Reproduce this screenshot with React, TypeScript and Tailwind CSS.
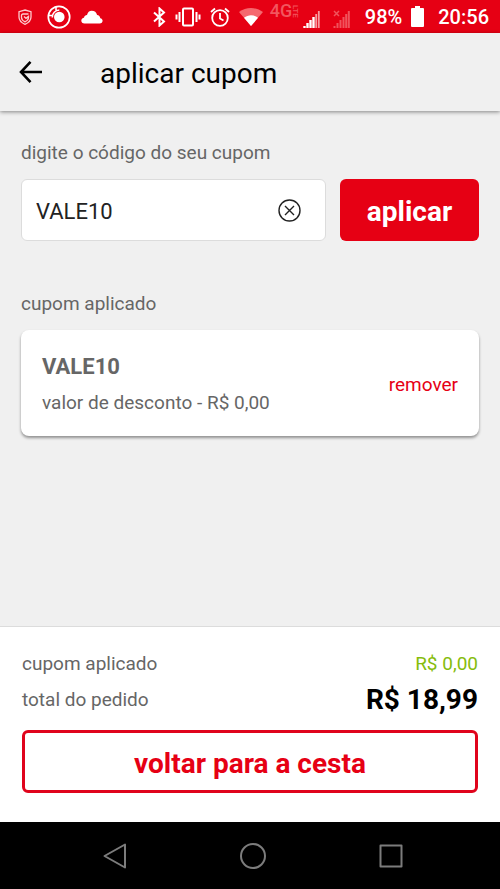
import { useState } from "react";

function StatusBar() {
  return (
    <div className="flex h-[33px] items-center justify-between bg-[#e60014] pr-[11px] pl-[18px] text-white">
      <div className="flex items-center">
        <svg className="h-4 w-[14px]" viewBox="0 0 14 16" fill="none" stroke="#ffc9cc" strokeWidth="1.3">
          <path d="M7 1 13 2.700V8c0 3.500-2.500 5.800-6 7.300C3.500 13.800 1 11.500 1 8V2.700Z" />
          <path d="M10.500 5H5Q3.500 5 3.500 6.500v2C3.500 10.500 5 11.800 7 12.800c2-1 3.500-2.300 3.500-4.300V7.300L8 9.300 6 7.500" />
        </svg>
        <svg className="ml-[15px] size-6" viewBox="0 0 24 24" fill="none" stroke="white">
          <circle cx="12" cy="12" r="10.700" strokeWidth="1.700" />
          <circle cx="12.300" cy="12" r="5.300" fill="white" stroke="none" />
          <path d="M9 1.500v3.800M1.500 10.500h4M5.300 12.500a7.200 7.200 0 0 1 7-7.500" strokeWidth="1.600" />
        </svg>
        <svg className="ml-[10px] h-[14px] w-[22px]" viewBox="0 0 22 14" fill="white">
          <path d="M3.500 13.500C1.500 13.500.300 12.300.300 10.700.300 9 1.500 8 3 7.800 3.300 6 4.600 5 6 5 6.700 2.300 8.300.800 10.700.800c2.800 0 4.800 1.500 5.400 4.200 1.800.100 3 1.400 3.200 3.200 1.500.300 2.300 1.300 2.300 2.600 0 1.600-1.200 2.700-2.900 2.700Z" />
        </svg>
      </div>
      <div className="flex items-center">
        <svg className="h-5 w-[13px]" viewBox="0 0 13 20" fill="none" stroke="white" strokeWidth="2">
          <path d="m1 5.500 10 9L6.500 18.500v-17L11 5.500l-10 9" />
        </svg>
        <svg className="ml-[9px] h-5 w-[26px]" viewBox="0 0 26 20" fill="none" stroke="white" strokeWidth="2">
          <rect x="8" y="1.500" width="10" height="17" rx="1" />
          <path d="M4.500 5v10M1.500 7.500v5M21.500 5v10M24.500 7.500v5" strokeWidth="2" />
        </svg>
        <svg className="ml-[9px] size-5" viewBox="0 0 20 20" fill="none" stroke="white" strokeWidth="1.800">
          <circle cx="10" cy="11" r="7.800" />
          <path d="M10 6v5.500l3.500 2M1 5l4-3.500M19 5l-4-3.500" />
        </svg>
        <svg className="ml-[9px] h-[18px] w-6" viewBox="0 0 24 18">
          <path d="M0 4C7-1.300 17-1.300 24 4L12 18Z" fill="#f5686f" />
          <path d="M5 9.800c4.200-3.400 9.800-3.400 14 0L12 18Z" fill="white" />
        </svg>
        <span className="mb-[11px] ml-[7px] flex h-4 w-[31px] items-center text-[#f2555e]">
          <span className="text-[18px] leading-4 font-medium">4G</span>
          <span className="text-[8px] leading-[7px] font-medium [writing-mode:vertical-rl]">LTE</span>
        </span>
        <svg className="mt-1 ml-[2px] h-[18px] w-[17px]" viewBox="0 0 17 18" strokeWidth="2.400">
          <path d="M1.500 18v-2M4.500 18v-5M7.500 18v-8M10.500 18V7" stroke="white" />
          <path d="M13.200 18V4M15.800 18V1" strokeWidth="1.800" stroke="#f79ba0" />
        </svg>
        <svg className="mt-1 ml-[13px] h-[18px] w-[17px]" viewBox="0 0 17 18" fill="none" stroke="#f0535c">
          <path d="M1.500 18v-2M4.500 18v-5M7.500 18v-8M10.500 18V7M13.200 18V4M15.800 18V1" strokeWidth="2" />
          <path d="m1 1 5 5M6 1 1 6" strokeWidth="1.500" />
        </svg>
        <span className="ml-[15px] text-xl leading-6 font-medium">98%</span>
        <svg className="ml-[9px] h-[21px] w-[13px]" viewBox="0 0 13 21" fill="white">
          <path d="M4 0h5v2h3q1 0 1 1v17q0 1-1 1H1q-1 0-1-1V3q0-1 1-1h3Z" />
        </svg>
        <span className="ml-[14px] text-xl leading-6 font-medium">20:56</span>
      </div>
    </div>
  );
}

function Header() {
  return (
    <header className="z-10 flex h-[78px] items-center bg-[#f0f0f0] pl-[18px] shadow-[0_1px_4px_rgba(0,0,0,0.45)]">
      <button type="button" aria-label="voltar" className="flex size-6 items-center justify-center">
        <svg className="size-6" viewBox="0 0 24 24" fill="none" stroke="black" strokeWidth="2.600">
          <path d="M24 12H3M12.500 1.800 3 12l9.500 10.200" />
        </svg>
      </button>
      <h1 className="ml-[58px] pt-1 text-[28px] leading-8 text-black">aplicar cupom</h1>
    </header>
  );
}

export default function App() {
  const [code, setCode] = useState("VALE10");

  return (
    <div className="flex min-h-screen flex-col bg-[#f0f0f0] font-['Roboto',sans-serif] text-[#666]">
      <StatusBar />
      <Header />
      <main className="flex-1 px-[21px] pt-[30px]">
        <label htmlFor="cupom" className="block text-[19px] leading-6">
          digite o código do seu cupom
        </label>
        <div className="mt-[14px] flex gap-[14px]">
          <div className="flex h-[62px] min-w-0 flex-1 items-center rounded-md border border-[#dcdcdc] bg-white pr-6 pl-[14px]">
            <input
              id="cupom"
              type="text"
              value={code}
              onChange={(e) => setCode(e.target.value)}
              className="min-w-0 flex-1 bg-transparent pt-1 text-[22px] leading-7 text-[#222] outline-none"
            />
            <button type="button" aria-label="limpar" onClick={() => setCode("")}>
              <svg className="size-[23px]" viewBox="0 0 23 23" fill="none" stroke="#222" strokeWidth="1.400">
                <circle cx="11.500" cy="11.500" r="10.500" />
                <path d="m7 7 9 9M16 7l-9 9" />
              </svg>
            </button>
          </div>
          <button type="button" className="h-[62px] w-[139px] rounded-md bg-[#e60014] pt-1 text-[28px] leading-8 font-bold text-white">
            aplicar
          </button>
        </div>

        <h2 className="mt-[51px] text-[19px] leading-6">cupom aplicado</h2>
        <section className="mt-[14px] flex h-[106px] items-center justify-between rounded-lg bg-white px-[21px] pt-1 shadow-[0_2px_3px_rgba(0,0,0,0.4)]">
          <div>
            <p className="text-[22px] leading-7 font-bold">VALE10</p>
            <p className="mt-2 text-[19px] leading-7">valor de desconto - R$ 0,00</p>
          </div>
          <button type="button" className="text-[19px] leading-6 text-[#e60014]">
            remover
          </button>
        </section>
      </main>

      <footer className="border-t border-[#dcdcdc] bg-white px-[22px] pt-[21px] pb-[29px]">
        <dl className="text-[19px]">
          <div className="flex h-8 items-center justify-between">
            <dt>cupom aplicado</dt>
            <dd className="text-[#86bc0c]">R$ 0,00</dd>
          </div>
          <div className="mt-1 flex h-8 items-center justify-between">
            <dt>total do pedido</dt>
            <dd className="text-[28px] leading-8 font-bold text-black">R$ 18,99</dd>
          </div>
        </dl>
        <button type="button" className="mt-[14px] h-[63px] w-full rounded-md border-[3px] border-[#e0041c] pt-1 text-[28px] leading-8 font-bold text-[#e60014]">
          voltar para a cesta
        </button>
      </footer>

      <nav className="flex h-[67px] items-center justify-between bg-black pr-[97px] pl-[103px]">
        <button type="button" aria-label="voltar">
          <svg className="h-[26px] w-6" viewBox="0 0 24 26" fill="none" stroke="#7c7c7c" strokeWidth="2" strokeLinejoin="round">
            <path d="M22 1.500v23L1.500 13Z" />
          </svg>
        </button>
        <button type="button" aria-label="início">
          <svg className="size-[26px]" viewBox="0 0 26 26" fill="none" stroke="#7c7c7c" strokeWidth="2">
            <circle cx="13" cy="13" r="12" />
          </svg>
        </button>
        <button type="button" aria-label="recentes">
          <svg className="size-6" viewBox="0 0 24 24" fill="none" stroke="#7c7c7c" strokeWidth="2" strokeLinejoin="round">
            <rect x="1.500" y="1.500" width="21" height="21" />
          </svg>
        </button>
      </nav>
    </div>
  );
}
